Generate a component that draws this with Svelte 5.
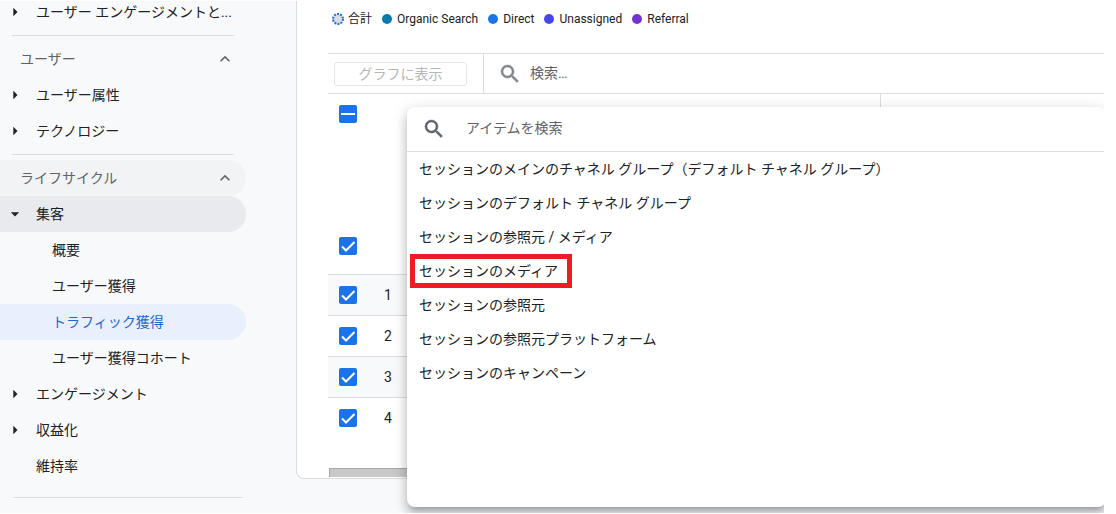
<script>
  const topItem = { label: "ユーザー エンゲージメントと...", arrow: "right" };

  const sections = [
    {
      title: "ユーザー",
      items: [
        { label: "ユーザー属性", arrow: "right" },
        { label: "テクノロジー", arrow: "right" },
      ],
    },
    {
      title: "ライフサイクル",
      shaded: true,
      items: [
        { label: "集客", arrow: "down", open: true },
        { label: "概要", nested: true },
        { label: "ユーザー獲得", nested: true },
        { label: "トラフィック獲得", nested: true, active: true },
        { label: "ユーザー獲得コホート", nested: true },
        { label: "エンゲージメント", arrow: "right" },
        { label: "収益化", arrow: "right" },
        { label: "維持率" },
      ],
    },
  ];

  const legend = [
    { name: "合計", total: true },
    { name: "Organic Search", color: "#077bb0" },
    { name: "Direct", color: "#1a73e8" },
    { name: "Unassigned", color: "#4a47ea" },
    { name: "Referral", color: "#7334cf" },
  ];

  const dimensions = [
    "セッションのメインのチャネル グループ（デフォルト チャネル グループ）",
    "セッションのデフォルト チャネル グループ",
    "セッションの参照元 / メディア",
    "セッションのメディア",
    "セッションの参照元",
    "セッションの参照元プラットフォーム",
    "セッションのキャンペーン",
  ];
  const marked = "セッションのメディア";

  let rows = $state([1, 2, 3, 4].map((n) => ({ n, checked: true })));
  let allChecked = $state(true);
  let totalChecked = $state(true);
  let tableQuery = $state("");
  let itemQuery = $state("");

  let visible = $derived(dimensions.filter((d) => d.includes(itemQuery)));
</script>

{#snippet searchIcon()}
  <svg class="search-icon" viewBox="0 0 24 24" aria-hidden="true">
    <path d="M15.5 14h-.79l-.28-.27A6.47 6.47 0 0 0 16 9.5 6.5 6.5 0 1 0 9.5 16c1.61 0 3.09-.59 4.23-1.57l.27.28v.79l5 4.99L20.49 19l-4.99-5zm-6 0C7.01 14 5 11.99 5 9.5S7.01 5 9.5 5 14 7.01 14 9.5 11.99 14 9.5 14z" />
  </svg>
{/snippet}

{#snippet navItem(item)}
  <a
    class="item"
    class:nested={item.nested}
    class:active={item.active}
    class:open={item.open}
    href="#report"
  >
    {#if !item.nested}
      <svg class="arrow" viewBox="0 0 24 24" aria-hidden="true">
        {#if item.arrow === "right"}
          <path d="M10 17l5-5-5-5z" />
        {:else if item.arrow === "down"}
          <path d="M7 10l5 5 5-5z" />
        {/if}
      </svg>
    {/if}
    <span class="label">{item.label}</span>
  </a>
{/snippet}

<div class="page">
  <div class="app">
    <nav class="sidebar">
      {@render navItem(topItem)}
      {#each sections as section}
        <hr />
        <button class="section" class:shaded={section.shaded} type="button">
          <span class="label">{section.title}</span>
          <svg viewBox="0 0 24 24" aria-hidden="true">
            <path d="M12 8l-6 6 1.41 1.41L12 10.83l4.59 4.58L18 14z" />
          </svg>
        </button>
        {#each section.items as item}
          {@render navItem(item)}
        {/each}
      {/each}
      <hr class="last" />
    </nav>

    <main class="card">
      <ul class="legend">
        {#each legend as entry}
          <li>
            {#if entry.total}
              <svg class="total" viewBox="0 0 12 12" aria-hidden="true">
                <circle cx="6" cy="6" r="5" />
              </svg>
            {:else}
              <i style="background: {entry.color}"></i>
            {/if}
            {entry.name}
          </li>
        {/each}
      </ul>

      <div class="toolbar">
        <div class="plot">
          <button type="button" disabled>グラフに表示</button>
        </div>
        <label class="search">
          {@render searchIcon()}
          <input type="text" placeholder="検索…" aria-label="検索" bind:value={tableQuery} />
        </label>
      </div>

      <div class="table-area">
        <table>
          <thead>
            <tr class="head">
              <th class="check">
                <label class="box">
                  <input type="checkbox" aria-label="すべて選択" bind:checked={allChecked} />
                  <svg viewBox="0 0 18 18" aria-hidden="true"><path d="M2 9h14" /></svg>
                </label>
              </th>
              <th class="num"></th>
              <th class="dim"></th>
              <th></th>
            </tr>
          </thead>
          <tbody>
            <tr class="sum">
              <td class="check">
                <label class="box">
                  <input type="checkbox" aria-label="合計" bind:checked={totalChecked} />
                  <svg viewBox="0 0 18 18" aria-hidden="true"><path d="M3 9.5l4 4 8.500-8.500" /></svg>
                </label>
              </td>
              <td></td>
              <td class="dim"></td>
              <td></td>
            </tr>
            {#each rows as row}
              <tr class="row">
                <td class="check">
                  <label class="box">
                    <input type="checkbox" aria-label="行 {row.n}" bind:checked={row.checked} />
                    <svg viewBox="0 0 18 18" aria-hidden="true"><path d="M3 9.5l4 4 8.500-8.500" /></svg>
                  </label>
                </td>
                <td class="num">{row.n}</td>
                <td class="dim"></td>
                <td></td>
              </tr>
            {/each}
          </tbody>
        </table>
        <div class="scrollbar"></div>

        <div class="picker">
          <label class="picker-search">
            {@render searchIcon()}
            <input type="text" placeholder="アイテムを検索" aria-label="アイテムを検索" bind:value={itemQuery} />
          </label>
          <ul>
            {#each visible as name}
              <li>
                <button type="button" class:marked={name === marked}>{name}</button>
              </li>
            {/each}
          </ul>
        </div>
      </div>
    </main>
  </div>
</div>

<style>
  :global(body) {
    margin: 0;
    background: #fff;
  }

  .page {
    box-sizing: border-box;
    display: flex;
    min-height: 100vh;
    padding: 1px 12px 1px 0;
    font-family: Roboto, "Noto Sans CJK JP", sans-serif;
    font-size: 14px;
    color: #202124;
  }

  .app {
    flex: 1;
    display: flex;
    align-items: flex-start;
    overflow: hidden;
    background: #f8f9fb;
  }

  button,
  input {
    font: inherit;
    color: inherit;
  }

  ul {
    margin: 0;
    padding: 0;
    list-style: none;
  }

  /* sidebar, scrolled a few pixels down */
  .sidebar {
    flex: none;
    width: 246px;
    margin: -7px 50px 0 0;
  }

  .item,
  .section {
    box-sizing: border-box;
    display: flex;
    align-items: center;
    width: 100%;
    height: 36px;
    border: 0;
    border-radius: 0 18px 18px 0;
    background: none;
    color: #202124;
    text-decoration: none;
    text-align: left;
  }

  .item {
    gap: 11px;
    padding: 0 12px 0 5px;
  }

  .item.nested {
    padding-left: 52px;
  }

  .item.open {
    background: #e8eaed;
  }

  .item.active {
    background: #e8f0fe;
    color: #1967d2;
  }

  .label {
    padding-bottom: 2px;
    white-space: nowrap;
  }

  .arrow {
    flex: none;
    width: 20px;
    height: 20px;
    fill: #202124;
  }

  .section {
    justify-content: space-between;
    padding: 0 11px 0 20px;
    color: #5f6368;
    cursor: pointer;
  }

  .section.shaded {
    background: #f1f3f4;
  }

  .section svg {
    width: 20px;
    height: 20px;
    fill: #5f6368;
  }

  hr {
    margin: 5px 12px;
    border: 0;
    border-top: 1px solid #dadce0;
  }

  hr.last {
    margin: 13px 3px 0 13px;
  }

  .card {
    flex: 1;
    min-width: 0;
    padding-left: 31px;
    border: 1px solid #dadce0;
    border-width: 0 0 1px 1px;
    border-radius: 0 0 0 8px;
    background: #fff;
  }

  .legend {
    display: flex;
    gap: 10px;
    height: 36px;
    padding: 8px 0 8px 4px;
    font-size: 12px;
    line-height: 20px;
    white-space: nowrap;
  }

  .legend li {
    display: flex;
    align-items: center;
    gap: 5px;
    height: 20px;
  }

  .legend li:first-child {
    gap: 4px;
  }

  .legend i {
    width: 10px;
    height: 10px;
    border-radius: 50%;
  }

  .total {
    width: 12px;
    height: 12px;
    fill: #dadce0;
    stroke: #1a73e8;
    stroke-width: 2;
    stroke-dasharray: 2 1.140;
  }

  .toolbar {
    display: flex;
    height: 39px;
    border: 1px solid #dadce0;
    border-width: 1px 0;
  }

  .plot {
    display: flex;
    align-items: center;
    padding: 0 16px 0 6px;
    border-right: 1px solid #dadce0;
  }

  .plot button {
    box-sizing: border-box;
    width: 133px;
    height: 24px;
    padding: 0;
    border: 1px solid #e4e5e7;
    border-radius: 3px;
    background: #fff;
    color: #b5b7ba;
    line-height: 20px;
  }

  .search,
  .picker-search {
    display: flex;
    flex: 1;
    align-items: center;
  }

  .search {
    gap: 8px;
    padding-left: 14px;
  }

  .search-icon {
    flex: none;
    width: 24px;
    height: 24px;
    fill: #80868b;
    stroke: #80868b;
    stroke-width: 0.5;
  }

  .search input,
  .picker-search input {
    flex: 1;
    min-width: 0;
    height: 24px;
    padding: 0 0 2px;
    box-sizing: border-box;
    border: 0;
    outline: none;
    background: none;
  }

  input::placeholder {
    color: #5f6368;
    opacity: 1;
  }

  .table-area {
    position: relative;
  }

  table {
    width: 100%;
    table-layout: fixed;
    border-collapse: separate;
    border-spacing: 0;
  }

  th,
  td {
    box-sizing: border-box;
    padding: 0;
    vertical-align: middle;
  }

  .head th {
    height: 123px;
    padding-top: 11px;
    vertical-align: top;
  }

  .sum td {
    height: 58px;
  }

  .row td {
    height: 41px;
  }

  .sum td,
  .row td {
    border-bottom: 1px solid #dadce0;
  }

  .row:last-child td {
    border-bottom-color: transparent;
  }

  .row:nth-child(even) {
    background: #f8f9fa;
  }

  .check,
  .num {
    width: 40px;
    text-align: center;
  }

  .dim {
    width: 473px;
    border-right: 1px solid #dadce0;
  }

  .box {
    display: grid;
    width: 18px;
    height: 18px;
    margin: 0 auto;
  }

  .box input,
  .box svg {
    grid-area: 1 / 1;
    width: 18px;
    height: 18px;
  }

  .box input {
    box-sizing: border-box;
    margin: 0;
    appearance: none;
    border: 2px solid #5f6368;
    border-radius: 2px;
  }

  .box input:checked {
    border-color: #1a73e8;
    background: #1a73e8;
  }

  .box svg {
    fill: none;
    stroke: #fff;
    stroke-width: 2;
    pointer-events: none;
  }

  .scrollbar {
    box-sizing: border-box;
    height: 9px;
    margin: 29px 0 1px 1px;
    border: 1px solid #a8a8a8;
    border-width: 1px 0 0 1px;
    background: #c8c8c8;
  }

  .picker {
    position: absolute;
    top: 13px;
    right: -2px;
    left: 79px;
    min-height: 400px;
    border-radius: 8px;
    background: #fff;
    box-shadow:
      0 5px 5px -3px rgba(0, 0, 0, 0.2),
      0 8px 10px 1px rgba(0, 0, 0, 0.14),
      0 3px 14px 2px rgba(0, 0, 0, 0.12);
  }

  .picker-search {
    gap: 20px;
    height: 44px;
    padding-left: 15px;
    border-bottom: 1px solid #dadce0;
  }

  .picker-search .search-icon {
    fill: #5f6368;
    stroke: #5f6368;
  }

  .picker li {
    display: flex;
    height: 34px;
    padding-left: 3px;
  }

  .picker li button {
    box-sizing: border-box;
    height: 34px;
    padding: 0 9px 0 4px;
    border: 5px solid transparent;
    background: none;
    line-height: 24px;
    white-space: nowrap;
    cursor: pointer;
  }

  .picker li button.marked {
    border-color: #ed1c24;
  }
</style>
